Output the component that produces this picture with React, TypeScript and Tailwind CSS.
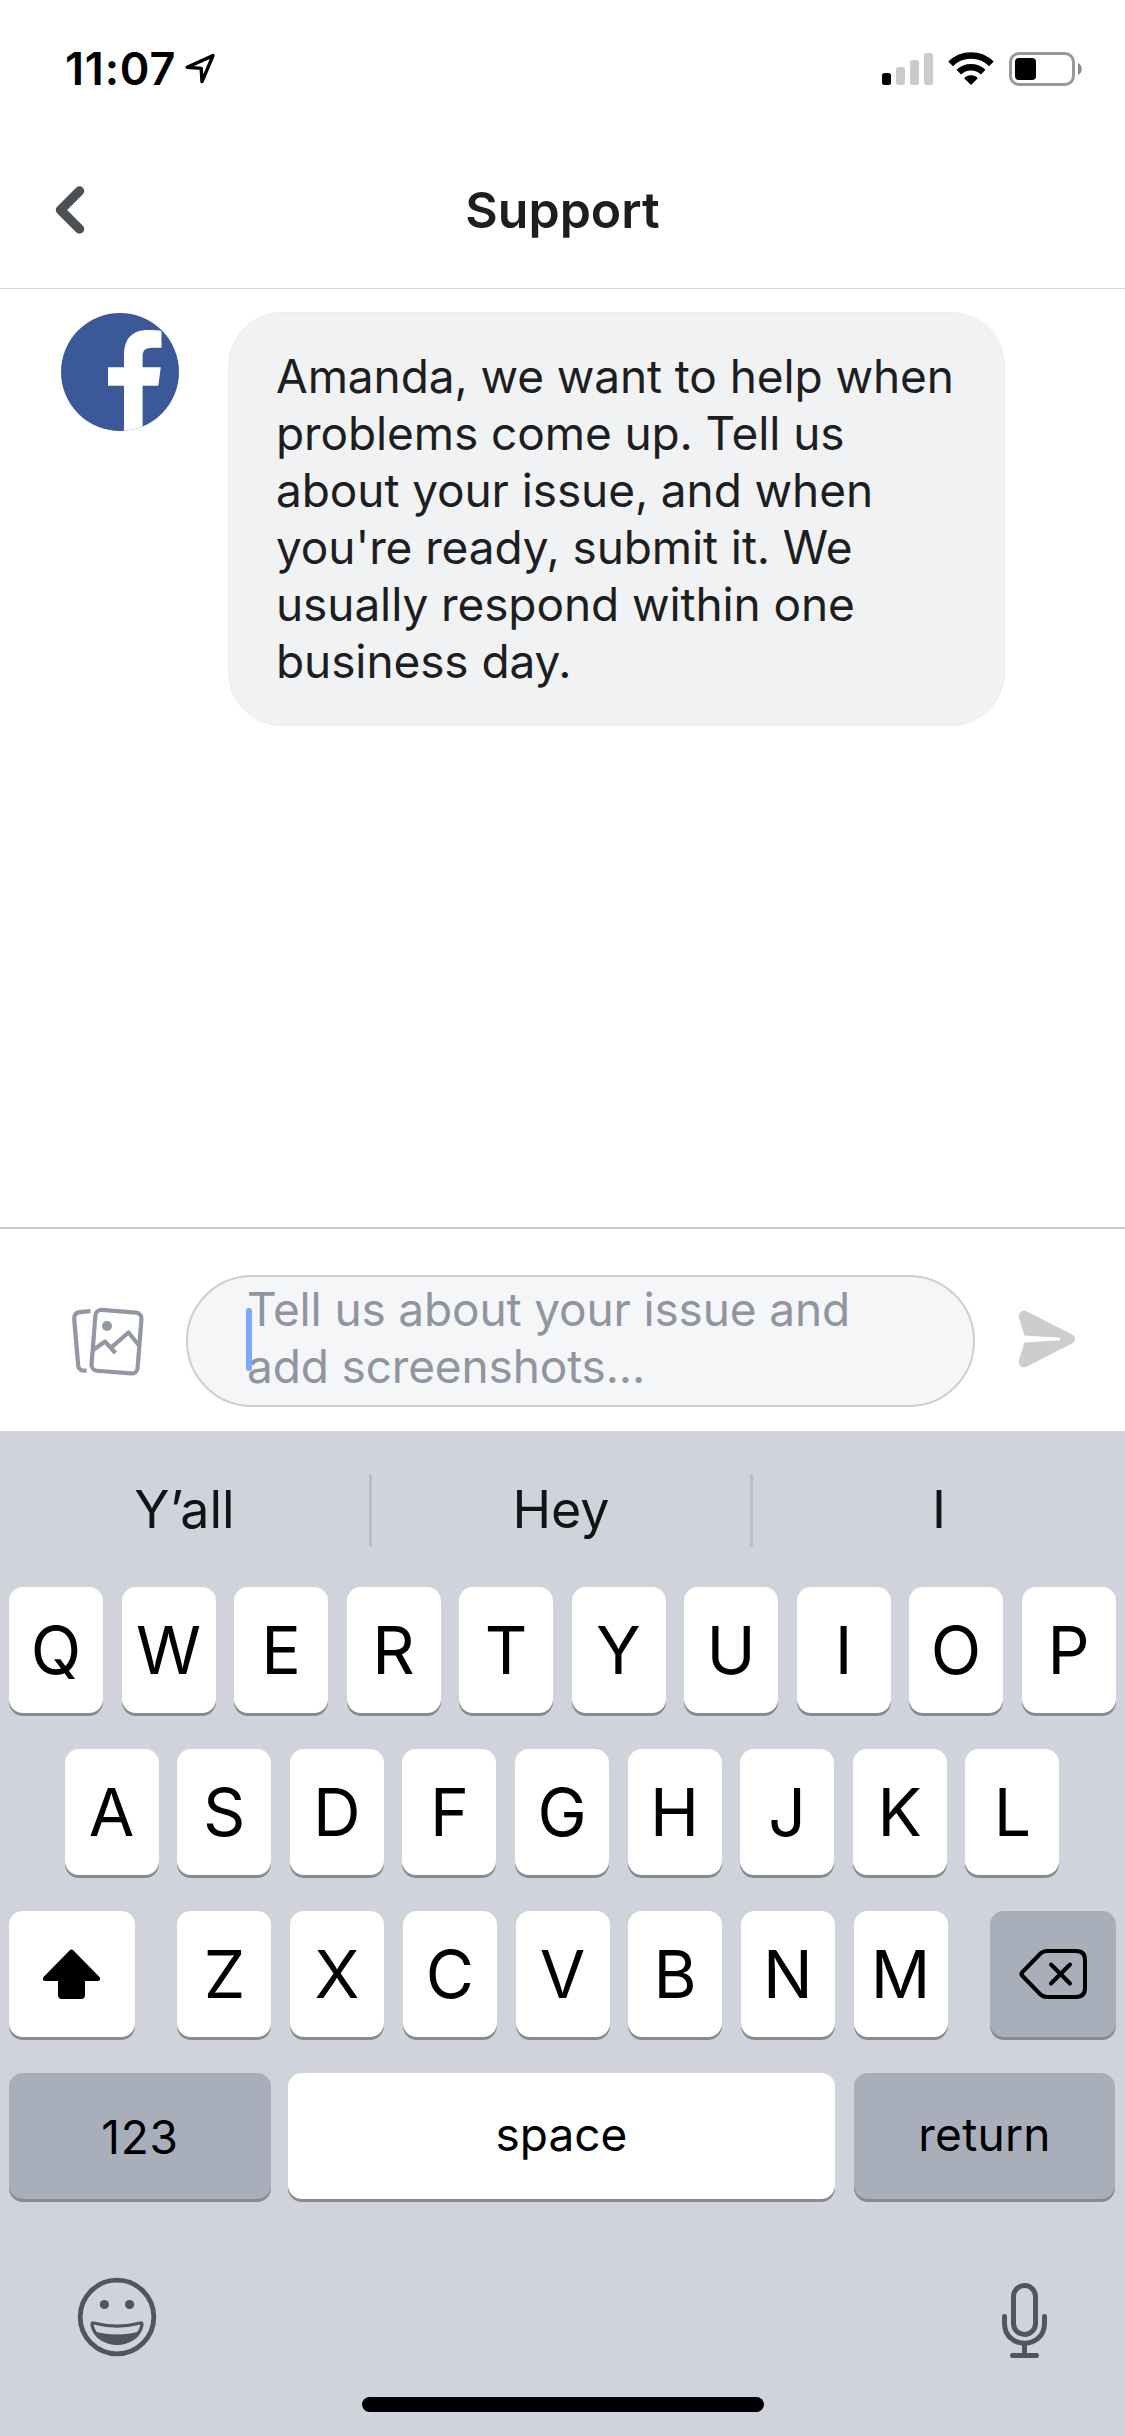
import React from 'react';

const topRow = ['Q', 'W', 'E', 'R', 'T', 'Y', 'U', 'I', 'O', 'P'];
const middleRow = ['A', 'S', 'D', 'F', 'G', 'H', 'J', 'K', 'L'];
const bottomRow = ['Z', 'X', 'C', 'V', 'B', 'N', 'M'];

const messageLines = [
  'Amanda, we want to help when',
  'problems come up. Tell us',
  'about your issue, and when',
  "you're ready, submit it. We",
  'usually respond within one',
  'business day.',
];

interface KeyProps {
  children: React.ReactNode;
  className?: string;
}

const Key = ({ children, className = 'w-[94px] bg-white text-[66px]' }: KeyProps) => (
  <button
    className={`flex h-[126px] shrink-0 items-center justify-center rounded-[14px] leading-none text-black shadow-[0_3px_0_#898a8e] ${className}`}
  >
    {children}
  </button>
);

const StatusBar = () => (
  <div className="flex h-[132px] items-start justify-between pl-[65px] pr-[43px] pt-[51px]">
    <div className="flex items-start">
      <span className="w-[119px] whitespace-nowrap text-[45px] font-semibold leading-[36px] tracking-[0.8px] text-black">11:07</span>
      <svg className="mt-[1px]" width="34" height="34" viewBox="0 0 34 34" fill="none" stroke="#000" strokeWidth="3.4" strokeLinejoin="round">
        <path d="M3.200 15.300 29 3.600 18 29.600 17.200 16.400Z" />
      </svg>
    </div>
    <div className="flex items-start">
      <svg width="200" height="36" viewBox="882 51 200 36">
        <rect x="882" y="73" width="9" height="12" rx="2.5" />
        <rect x="896" y="67" width="9" height="18" rx="2.5" fill="#cbcbcb" />
        <rect x="910" y="60" width="9" height="25" rx="2.5" fill="#cbcbcb" />
        <rect x="924" y="53" width="9" height="32" rx="2.5" fill="#cbcbcb" />
        <path d="M971 85 964.4 78.6Q964.2 77.6 965.3 77C968.6 74.6 973.4 74.6 976.7 77Q977.8 77.6 977.6 78.6Z" />
        <path d="M958.8 72.2A17.5 17.5 0 0 1 983.2 72.2" fill="none" stroke="#000" strokeWidth="6.6" />
        <path d="M950.6 63.9A29 29 0 0 1 991.4 63.9" fill="none" stroke="#000" strokeWidth="6.6" />
        <rect x="1010.5" y="53.5" width="63" height="31" rx="8.5" fill="none" stroke="#999" strokeWidth="3" />
        <rect x="1015" y="58" width="21" height="22" rx="4" />
        <path d="M1078 63C1083 65 1083 73 1078 75Z" fill="#8c8c8c" />
      </svg>
    </div>
  </div>
);

const Header = () => (
  <header className="grid h-[157px] grid-cols-3 items-start border-b border-[#d3d3d3] pt-[48px]">
    <svg className="ml-[50px] mt-[3px]" width="40" height="54" viewBox="50 183 40 54" fill="none" stroke="#4b4f56" strokeWidth="9.5" strokeLinecap="round" strokeLinejoin="round">
      <path d="M79.5 191 60.5 210 79.5 229" />
    </svg>
    <h1 className="text-center text-[50px] font-semibold leading-[60px] text-[#1c1e21]">Support</h1>
  </header>
);

const Conversation = () => (
  <div className="flex h-[938px] items-start pl-[61px] pt-[24px]">
    <svg className="mr-[49px] shrink-0" width="118" height="118" viewBox="61 313 118 118">
      <defs>
        <clipPath id="avatar">
          <circle cx="120" cy="372" r="59" />
        </clipPath>
      </defs>
      <g clipPath="url(#avatar)">
        <rect x="61" y="313" width="118" height="118" fill="#3b5998" />
        <path
          d="M124 431V385.7H108V367.3H124V355C124 338 133 330 148 330C154 330 159 330.4 161.5 331V347.7H152C144 347.7 142.6 351.5 142.6 357V367.3H160.8L158.3 385.7H142.6V431Z"
          fill="#fff"
        />
      </g>
    </svg>
    <div className="-mt-px h-[414px] w-[777px] rounded-[54px] border border-[#ebecee] bg-[#f1f2f4] pl-[47px] pt-[35px] text-[46px] leading-[57px] tracking-[-0.1px] text-[#1c1e21]">
      {messageLines.map((line) => (
        <p key={line} className="whitespace-nowrap">{line}</p>
      ))}
    </div>
  </div>
);

const Composer = () => (
  <div className="flex h-[204px] items-start border-t-2 border-[#cbcdcf] pl-[70px] pt-[46px]">
    <svg className="mr-[40px] mt-[30px] shrink-0" width="76" height="72" viewBox="70 1305 76 72" fill="none" stroke="#9298a3" strokeWidth="4.2" strokeLinejoin="round">
      <path d="M90.5 1311.2 80 1312.2Q73.8 1312.8 74.2 1319L78.2 1365.5Q78.9 1371.5 86.5 1370.5" />
      <rect x="93.4" y="1311.2" width="46.2" height="61" rx="6" transform="rotate(4.5 116.5 1341.7)" />
      <path d="M92.5 1350.5 105 1341.5 115.5 1353M112 1346.8 128.5 1332.5 139.5 1346" />
      <circle cx="107" cy="1326" r="5" fill="#9298a3" stroke="none" />
    </svg>
    <div className="relative h-[132px] w-[789px] shrink-0 rounded-full border-2 border-[#cccfd2] bg-[#f5f6f8] pl-[59px] pt-[4px] text-[46px] leading-[57px] tracking-[-0.15px] text-[#9095a0]">
      <p className="whitespace-nowrap">Tell us about your issue and</p>
      <p className="whitespace-nowrap">add screenshots...</p>
      {/* text caret */}
      <span className="absolute left-[58px] top-[31px] h-[63px] w-[6px] rounded-full bg-[#76a3ff]/95" />
    </div>
    <svg className="ml-[42px] mt-[34px] shrink-0" width="60" height="60" viewBox="1017 1309 60 60" fill="#cdcdcd">
      <path d="M1024.4 1335.600 1018.900 1317.500C1017.800 1312.500 1022.500 1309 1027 1311.500L1072 1334.500C1076 1336.500 1076 1341.500 1072 1343.500L1027 1366.500C1022.500 1369 1017.800 1365.500 1018.900 1360.500L1024.400 1342.400 1060 1340.200V1337.800Z" />
    </svg>
  </div>
);

const Suggestions = () => (
  <div className="flex h-[156px] items-start pt-[43px] text-[52px] text-[#131416]">
    <span className="w-[369px] shrink-0 text-center leading-[71px]">Y’all</span>
    <span className="h-[73px] w-[3px] shrink-0 rounded-full bg-[#bbbdc6]" />
    <span className="w-[378px] shrink-0 text-center leading-[71px]">Hey</span>
    <span className="h-[73px] w-[3px] shrink-0 rounded-full bg-[#bbbdc6]" />
    <span className="flex-1 text-center leading-[71px]">I</span>
  </div>
);

const Keyboard = () => (
  <div className="h-[1005px] bg-[#d0d3db]">
    <Suggestions />
    <div className="flex flex-col gap-[36px] px-[9px]">
      <div className="flex gap-[18.5px]">
        {topRow.map((letter) => (
          <Key key={letter}>{letter}</Key>
        ))}
      </div>
      <div className="flex justify-center gap-[18.6px] pr-px">
        {middleRow.map((letter) => (
          <Key key={letter}>{letter}</Key>
        ))}
      </div>
      <div className="flex justify-between">
        <Key className="w-[126px] bg-white">
          <svg width="58" height="50" viewBox="44 1949 58 50">
            <path d="M70.5 1950.5Q72.5 1948.5 74.5 1950.5L100.5 1977Q102.5 1981 98.5 1981H86V1995Q86 1999 82 1999H63Q59 1999 59 1995V1981H46.5Q42.5 1981 44.5 1977Z" />
          </svg>
        </Key>
        <div className="flex gap-[18.7px]">
          {bottomRow.map((letter) => (
            <Key key={letter}>{letter}</Key>
          ))}
        </div>
        <Key className="w-[126px] bg-[#a9aebb]">
          <svg width="70" height="52" viewBox="1018 1948 70 52" fill="none" stroke="#000" strokeWidth="4" strokeLinecap="round" strokeLinejoin="round">
            <path d="M1047 1951H1076Q1085 1951 1085 1960V1988Q1085 1997 1076 1997H1047Q1043 1997 1040 1994L1022.5 1976Q1020.5 1974 1022.5 1972L1040 1954Q1043 1951 1047 1951Z" />
            <path d="M1051 1964.5 1070 1983.5M1070 1964.5 1051 1983.5" />
          </svg>
        </Key>
      </div>
      <div className="flex gap-[17px]">
        <Key className="w-[262px] bg-[#a9aebb] pt-px text-[46px] tracking-[0.8px]">123</Key>
        <Key className="w-[547px] bg-white pb-[5px] text-[46px]">space</Key>
        <Key className="ml-[2px] w-[261px] bg-[#a9aebb] pb-[5px] text-[46px] tracking-[0.3px]">return</Key>
      </div>
    </div>
    <div className="flex items-start justify-between pl-[77px] pr-[76px] pt-[78px]">
      <svg width="80" height="80" viewBox="77 2277 80 80" fill="none" stroke="#50555e" strokeWidth="4.8">
        <circle cx="117" cy="2317" r="36.8" />
        <circle cx="104.4" cy="2304.5" r="4.6" fill="#50555e" stroke="none" />
        <circle cx="129.6" cy="2304.5" r="4.6" fill="#50555e" stroke="none" />
        <path d="M93.5 2323C109 2327 125 2327 140.5 2323Q142.5 2322.6 141.9 2325.5C136 2349.5 98 2349.5 92.1 2325.5Q91.5 2322.6 93.5 2323Z" strokeWidth="3.2" />
        <path d="M94.5 2331.5C109 2335.5 125 2335.5 139.5 2331.5C133 2348 101 2348 94.5 2331.5Z" fill="#50555e" stroke="none" />
      </svg>
      <svg className="mt-[4px]" width="50" height="80" viewBox="999 2281 50 80" fill="none" stroke="#50555e" strokeWidth="5" strokeLinecap="round">
        <rect x="1013.5" y="2285.5" width="22" height="49" rx="11" />
        <path d="M1004.5 2316.5V2323C1004.5 2350 1044.5 2350 1044.5 2323V2316.5M1024.5 2344V2355M1012.5 2355.5H1036.5" />
      </svg>
    </div>
    <div className="mx-auto mt-[36px] h-[15px] w-[402px] rounded-full bg-black" />
  </div>
);

const App = () => {
  return (
    <div className="h-[2436px] w-[1125px] overflow-hidden bg-white font-['Inter','Liberation_Sans',sans-serif]">
      <StatusBar />
      <Header />
      <Conversation />
      <Composer />
      <Keyboard />
    </div>
  );
};

export default App;
